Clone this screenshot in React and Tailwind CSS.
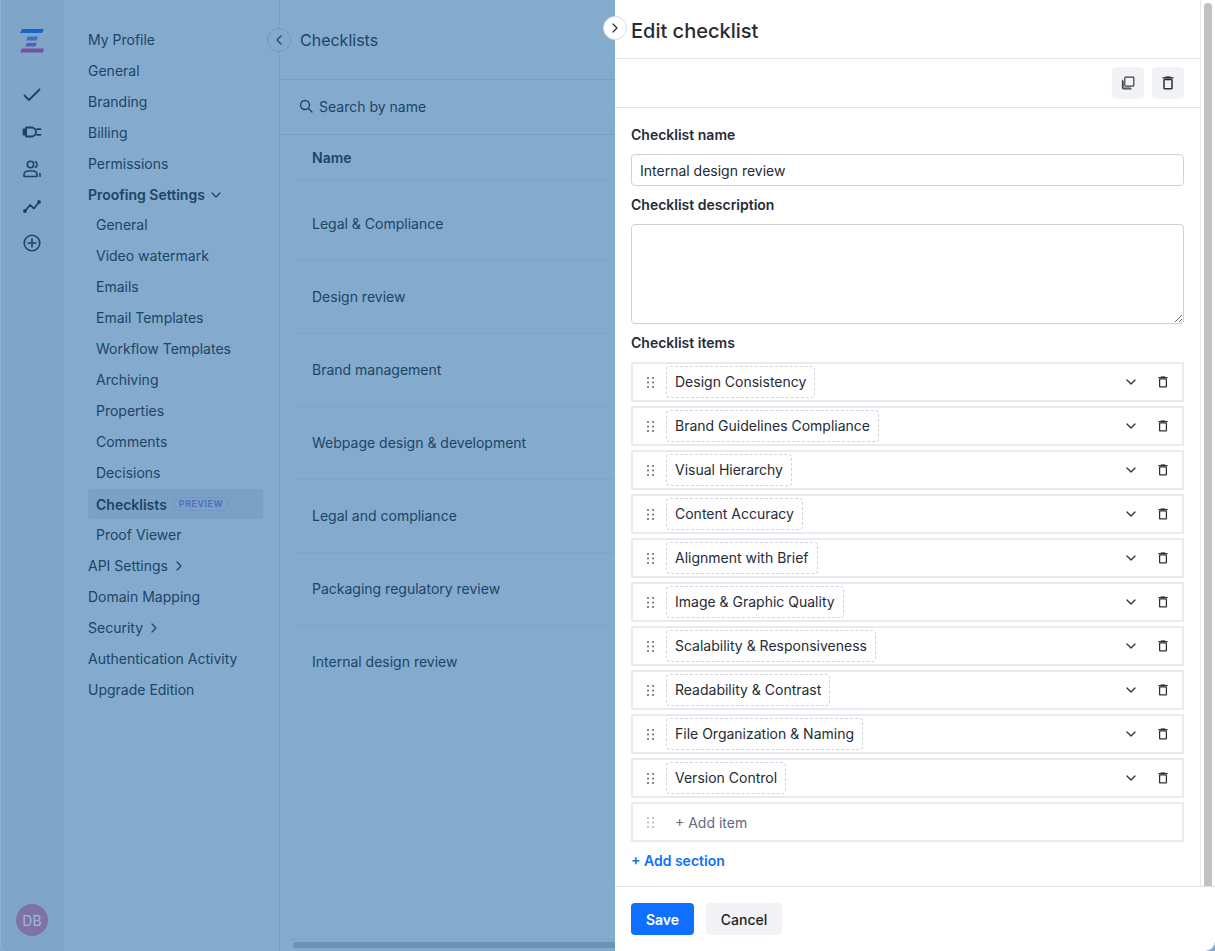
import React from "react";

const F = { fontFamily: "Inter, 'Liberation Sans', sans-serif" };

const Trash = ({ className = "" }) => (
  <svg width="12" height="14" viewBox="0 0 12 14" fill="none" stroke="#2b2f38" strokeWidth="1.5" className={className}>
    <path d="M0.500 1.900h11" strokeWidth="1.400" />
    <path d="M3.400 1.200h5.200" strokeWidth="1.600" />
    <rect x="2" y="3.400" width="8" height="9.400" rx="0.800" />
  </svg>
);

const Copy = () => (
  <svg width="14" height="14" viewBox="0 0 14 14" fill="none" stroke="#3a3f4a" strokeWidth="1.200">
    <rect x="3.800" y="1.100" width="9" height="9" rx="0.800" />
    <path d="M1.500 3.800v8c0 .6.400 1 1 1h8" />
    <path d="M2.500 5v6.800h7" strokeWidth="0.700" />
  </svg>
);

const Grip = ({ c = "#5d6579" }) => (
  <svg width="7" height="11" viewBox="0 0 7 11" fill={c}>
    <circle cx="1" cy="1" r="1" /><circle cx="6" cy="1" r="1" />
    <circle cx="1" cy="5.500" r="1" /><circle cx="6" cy="5.500" r="1" />
    <circle cx="1" cy="10" r="1" /><circle cx="6" cy="10" r="1" />
  </svg>
);

const Chevron = ({ dir = "down", c = "currentColor", s = 10 }) => {
  const d = { down: "M1 3l4 4 4-4", up: "M1 7l4-4 4 4", left: "M7 1L3 5l4 4", right: "M3 1l4 4-4 4" }[dir];
  return (
    <svg width={s} height={s} viewBox="0 0 10 10" fill="none" stroke={c} strokeWidth="1.200" strokeLinecap="round" strokeLinejoin="round">
      <path d={d} />
    </svg>
  );
};

const Logo = () => (
  <svg width="24" height="24" viewBox="0 0 24 24">
    <path d="M2 0h22l-2 4H0z" fill="#1767c9" />
    <path d="M8 7.500h10l-1.500 4H6z" fill="#3f6fc8" />
    <path d="M7 14h10l-1.500 3.500H5z" fill="#5560b8" />
    <path d="M2 19.500h22l-1 4H0z" fill="#75529b" />
  </svg>
);

const RailIcons = () => (
  <div className="flex flex-col items-center gap-[15px] text-[#1c4467]">
    <svg width="22" height="22" viewBox="0 0 22 22" fill="none" stroke="currentColor" strokeWidth="1.800" strokeLinecap="round" strokeLinejoin="round">
      <path d="M3.500 11.500l4.500 4.500L18.500 5.500" />
    </svg>
    <svg width="22" height="22" viewBox="0 0 22 22" fill="none" stroke="currentColor" strokeWidth="1.800" strokeLinecap="round" strokeLinejoin="round">
      <path d="M2.500 8.500h2.500v5H2.500z" fill="currentColor" />
      <path d="M5 6.500h5.500a4.500 4.500 0 0 1 0 9H5z" />
      <path d="M16 8.200h3.500M16 13.800h3.500" />
    </svg>
    <svg width="22" height="22" viewBox="0 0 22 22" fill="none" stroke="currentColor" strokeWidth="1.600" strokeLinecap="round" strokeLinejoin="round">
      <circle cx="9.500" cy="6.500" r="3.200" />
      <path d="M3 18.500v-1.800c0-2.300 1.800-3.700 4-3.700h5c2.200 0 4 1.400 4 3.700v1.800z" />
      <path d="M14.500 3.800c1.200.6 1.700 1.600 1.700 2.700s-.5 2.100-1.700 2.700M19 15.500v3" />
    </svg>
    <svg width="22" height="22" viewBox="0 0 22 22" fill="none" stroke="currentColor" strokeWidth="1.800" strokeLinecap="round" strokeLinejoin="round">
      <path d="M4 16l5-6 4 3.500 5-6.500" />
      <circle cx="4" cy="16" r="1" fill="currentColor" />
      <circle cx="18" cy="7" r="1" fill="currentColor" />
    </svg>
    <svg width="22" height="22" viewBox="0 0 22 22" fill="none" stroke="currentColor" strokeWidth="1.600" strokeLinecap="round">
      <circle cx="11" cy="11" r="7.800" />
      <path d="M11 7v8M7 11h8" />
    </svg>
  </div>
);

const nav = [
  ["My Profile", 0], ["General", 0], ["Branding", 0], ["Billing", 0], ["Permissions", 0],
  ["Proofing Settings", 0, "bold", "down"],
  ["General", 1], ["Video watermark", 1], ["Emails", 1], ["Email Templates", 1], ["Workflow Templates", 1],
  ["Archiving", 1], ["Properties", 1], ["Comments", 1], ["Decisions", 1],
  ["Checklists", 1, "active"], ["Proof Viewer", 1],
  ["API Settings", 0, "", "right"], ["Domain Mapping", 0], ["Security", 0, "", "right"],
  ["Authentication Activity", 0], ["Upgrade Edition", 0],
];

const rows = ["Legal & Compliance", "Design review", "Brand management", "Webpage design & development", "Legal and compliance", "Packaging regulatory review", "Internal design review"];
const items = ["Design Consistency", "Brand Guidelines Compliance", "Visual Hierarchy", "Content Accuracy", "Alignment with Brief", "Image & Graphic Quality", "Scalability & Responsiveness", "Readability & Contrast", "File Organization & Naming", "Version Control"];

export default function App() {
  return (
    <div style={F} className="relative flex h-[951px] w-[1215px] overflow-hidden bg-[#84abcd] text-[14px] text-[#1c4467]">
      {/* rail */}
      <div className="flex w-[64px] shrink-0 flex-col items-center rounded-bl-[6px] border-l border-l-[#8db2d2] bg-[#7fa6c8] pt-[29px] pr-[1px] pb-[15px]">
        <Logo />
        <div className="mt-[31px]"><RailIcons /></div>
        <div className="mt-auto flex h-[32px] w-[32px] items-center justify-center rounded-full bg-[#7f72a5] text-[14px] text-[#9dbad6]">DB</div>
      </div>

      {/* settings nav */}
      <div className="relative w-[216px] shrink-0 border-r border-r-[#76a0c3] pt-[24px] pl-[24px]">
        <div className="flex flex-col">
          {nav.map(([t, sub, mod, ch], i) => (
            <div key={i} className={`flex items-center rounded-[2px] ${sub ? "pl-[8px]" : ""} ${mod === "active" ? "mt-[1px] mr-[16px] h-[30px] bg-[#7ba2c4] font-semibold" : "h-[31px]"} ${mod === "bold" ? "mb-[-1px] font-semibold" : ""}`}>
              <span>{t}</span>
              {ch && <span className="ml-[6px]"><Chevron dir={ch} /></span>}
              {mod === "active" && (
                <span className="ml-[6px] rounded-full border border-[#7396c8] px-[5px] text-[9px] leading-[12px] font-semibold tracking-[0.5px] text-[#4f6cc0]">PREVIEW</span>
              )}
            </div>
          ))}
        </div>
        <div className="absolute top-[28px] right-[-12px] z-10 flex h-[24px] w-[24px] items-center justify-center rounded-full border border-[#6f9bc0] bg-[#84abcd]">
          <Chevron dir="left" />
        </div>
      </div>

      {/* main list */}
      <div className="relative w-[335px] shrink-0 overflow-hidden">
        <div className="flex h-[80px] items-center border-b border-b-[#76a0c3] pl-[20px] text-[16px]">Checklists</div>
        <div className="flex h-[55px] items-center gap-[6px] border-b border-b-[#76a0c3] pb-[2px] pl-[19px]">
          <svg width="14" height="14" viewBox="0 0 14 14" fill="none" stroke="currentColor" strokeWidth="1.300" strokeLinecap="round">
            <circle cx="6" cy="6" r="4.500" /><path d="M9.500 9.500L13 13" />
          </svg>
          <span>Search by name</span>
        </div>
        <div className="ml-[15px]">
          <div className="flex h-[45px] items-center border-b border-b-[#7da6c9] pt-[1px] pl-[17px] font-semibold">Name</div>
          {rows.map((r, i) => (
            <div key={r} className={`flex items-center border-b border-b-[#7da6c9] pl-[17px] ${i === 0 ? "h-[81px] pt-[7px]" : "h-[73px] pb-[2px]"} ${i === 6 ? "border-b-0" : ""}`}>{r}</div>
          ))}
        </div>
        <div className="absolute right-0 bottom-0 left-[9px] h-[12px] border-t border-t-[#7aa3c6]">
          <div className="mt-[2px] ml-[4px] h-[6px] w-[330px] rounded-full bg-[#6b93b6]" />
        </div>
      </div>

      {/* panel */}
      <div className="relative flex w-[600px] shrink-0 flex-col rounded-br-[10px] bg-white text-[#262b36]">
        <div className="flex h-[886px] shrink-0">
          <div className="w-[586px] shrink-0 border-r border-r-[#e6e7ee]">
            <div className="flex h-[59px] items-center border-b border-b-[#e4e5ec] pt-[3px] pl-[16px] text-[20px] font-medium">Edit checklist</div>
            <div className="flex h-[49px] items-center justify-end gap-[8px] border-b border-b-[#e4e5ec] pr-[16px]">
              <div className="flex h-[32px] w-[32px] items-center justify-center rounded-[4px] bg-[#f2f3f7]"><Copy /></div>
              <div className="flex h-[32px] w-[32px] items-center justify-center rounded-[4px] bg-[#f2f3f7]"><Trash /></div>
            </div>
            <div className="flex flex-col pt-[17px] pr-[16px] pl-[16px]">
              <div className="h-[20px] leading-[20px] font-semibold">Checklist name</div>
              <div className="mt-[9px] flex h-[32px] items-center rounded-[4px] border border-[#d0d1dc] pl-[8px]">Internal design review</div>
              <div className="mt-[9px] h-[20px] leading-[20px] font-semibold">Checklist description</div>
              <textarea readOnly className="mt-[9px] block h-[100px] w-full rounded-[4px] border border-[#d0d1dc] bg-white outline-none" />
              <div className="mt-[9px] h-[20px] leading-[20px] font-semibold">Checklist items</div>
              <div className="mt-[9px] flex flex-col gap-[4px]">
                {items.map((t) => (
                  <div key={t} className="flex h-[40px] items-center border-2 border-[#eaebf0] pr-[13px] pl-[14px]">
                    <Grip />
                    <div className="ml-[12px] flex h-[32px] items-center rounded-[4px] border border-dashed border-[#d3d2df] px-[8px] pb-[1px]">{t}</div>
                    <span className="mr-[21px] ml-auto"><Chevron /></span>
                    <Trash className="scale-[0.85]" />
                  </div>
                ))}
                <div className="flex h-[40px] items-center border-2 border-[#eaebf0] pl-[14px] text-[#616a80]">
                  <Grip c="#a9adb9" />
                  <span className="ml-[21px]">+ Add item</span>
                </div>
              </div>
              <div className="mt-[9px] h-[20px] leading-[20px] font-semibold text-[#0f6fff]">+ Add section</div>
            </div>
          </div>
          <div className="flex w-[14px] justify-center bg-white pt-[3px]">
            <div className="h-full w-[8px] rounded-t-full bg-[#c1c1c1]" />
          </div>
        </div>
        <div className="flex flex-1 gap-[12px] border-t border-t-[#e4e5ec] pt-[16px] pl-[16px]">
          <div className="flex h-[32px] w-[63px] items-center justify-center rounded-[4px] bg-[#0f6fff] font-semibold text-white">Save</div>
          <div className="flex h-[32px] w-[76px] items-center justify-center rounded-[4px] bg-[#f2f3f7] font-medium text-[#1d1f26]">Cancel</div>
        </div>
        <div className="absolute top-[16px] left-[-12px] flex h-[24px] w-[24px] items-center justify-center rounded-full border border-[#d9dbe6] bg-white text-[#2b2f38]">
          <Chevron dir="right" />
        </div>
      </div>
    </div>
  );
}
